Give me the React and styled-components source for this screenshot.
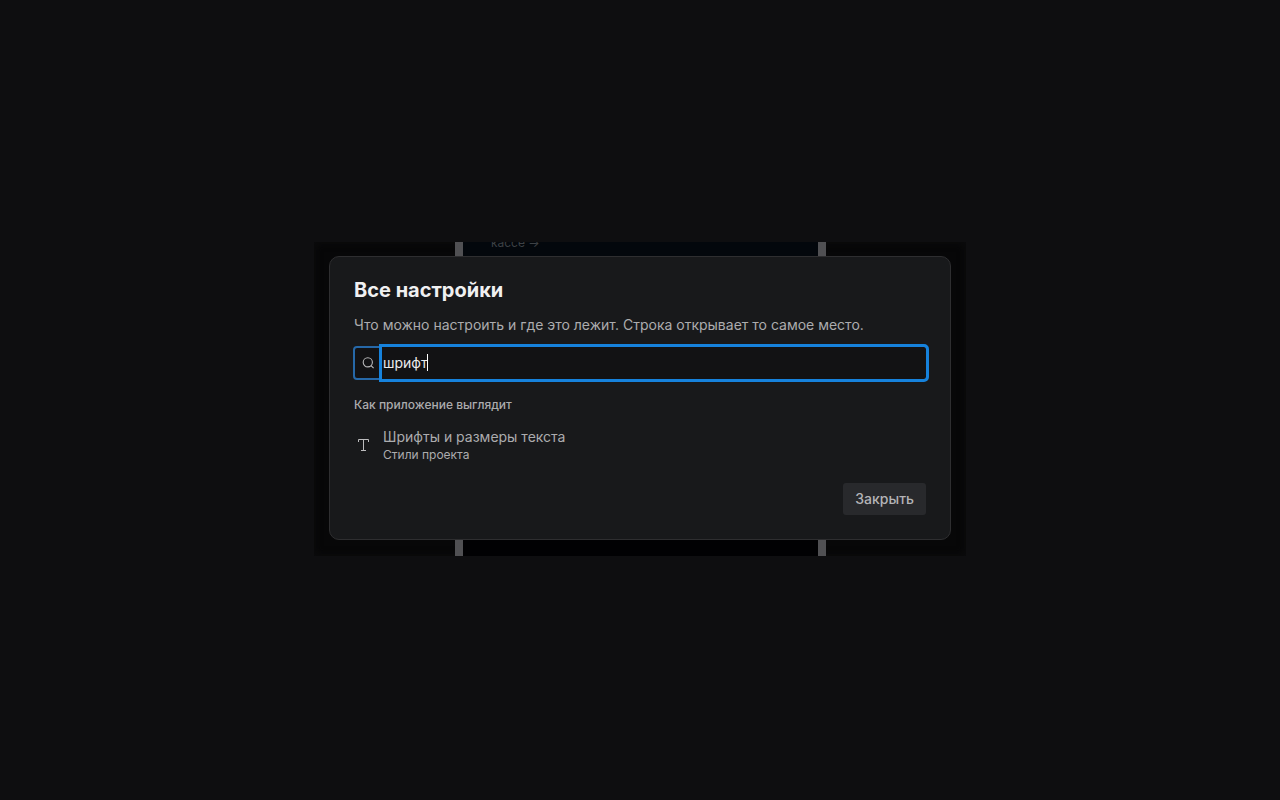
import React, { useState } from "react";
import styled, { createGlobalStyle } from "styled-components";

const GlobalStyle = createGlobalStyle`
  *, *::before, *::after {
    box-sizing: border-box;
  }

  body {
    margin: 0;
    background: #0e0e10;
    color: #acacae;
    font-family: Inter, "Liberation Sans", sans-serif;
    font-size: 14px;
    line-height: 20px;
  }
`;

const Page = styled.main`
  display: flex;
  align-items: center;
  justify-content: center;
  min-height: 100vh;
  padding: 0 16px 2px;
`;

const Stage = styled.div`
  position: relative;
  width: 100%;
  max-width: 652px;
  padding: 14px 15px 16px;
`;

const Backdrop = styled.div`
  position: absolute;
  inset: 0;
  display: grid;
  grid-template-columns: 141px 1fr 140px;
  overflow: hidden;
  background: #070708;
  box-shadow: inset 0 0 6px 2px #0b0b0c;
`;

const Canvas = styled.div`
  grid-column: 2;
  border: solid #505053;
  border-width: 0 8px;
  padding: 0 28px;
  background: linear-gradient(#03070c, #03070c 50%, #010103 50%);
`;

const CanvasText = styled.p`
  margin: -9px 0 0;
  color: #3d4145;
  font-size: 12px;
  line-height: 20px;
`;

const Dialog = styled.section`
  position: relative;
  padding: 20px 24px 24px;
  border: 1px solid #2e2e30;
  border-radius: 10px;
  background: #18191b;
`;

const Title = styled.h1`
  margin: 0;
  color: #f0f0f1;
  font-size: 20px;
  font-weight: 700;
  line-height: 26px;
`;

const Description = styled.p`
  margin: 12px 0;
`;

const Search = styled.label`
  display: flex;
  height: 32px;
  border-radius: 3px;
  background: #121214;
  outline: 2px solid #2668a8;
  outline-offset: -1px;
`;

const SearchIcon = styled.span`
  display: flex;
  align-items: center;
  justify-content: center;
  width: 28px;
`;

const Field = styled.span`
  position: relative;
  flex: 1;
  display: flex;
`;

const Input = styled.input`
  width: 100%;
  padding: 0 1px;
  border: 0;
  border-radius: 0 2px 2px 0;
  outline: 3px solid #1682dc;
  background: #121214;
  color: #ececed;
  font: inherit;
  caret-color: transparent;
`;

const Caret = styled.span`
  position: absolute;
  top: 7px;
  left: 45px;
  width: 1px;
  height: 17px;
  background: #fff;
`;

const GroupTitle = styled.h2`
  margin: 18px 0 8px;
  font-size: 12px;
  font-weight: 500;
  line-height: 16px;
`;

const SettingLink = styled.a`
  display: flex;
  align-items: center;
  gap: 10px;
  padding: 6px 0;
  color: inherit;
  text-decoration: none;
`;

const SettingIcon = styled.span`
  display: flex;
  justify-content: center;
  width: 19px;
`;

const SettingName = styled.span`
  display: block;
`;

const SettingPlace = styled.span`
  display: block;
  font-size: 12px;
  line-height: 16px;
`;

const Footer = styled.footer`
  display: flex;
  justify-content: flex-end;
  margin-top: 14px;
`;

const Button = styled.button`
  height: 32px;
  padding: 0 12px;
  border: 0;
  border-radius: 3px;
  background: #28292c;
  color: #b4b4b7;
  font: inherit;
  font-weight: 500;
`;

const MagnifierIcon = () => (
  <svg width="12" height="12" viewBox="0 0 12 12" fill="none" stroke="#b8b8ba" strokeWidth="1.1" aria-hidden="true">
    <circle cx="5.8" cy="5.3" r="4.6" />
    <path d="M9 8.6 11.6 11.2" />
  </svg>
);

const TypeIcon = () => (
  <svg width="13" height="14" viewBox="0 0 13 14" fill="none" stroke="#bcbcbe" aria-hidden="true">
    <path d="M1.5 4V1.5h10V4M6.5 1.5v11M4 12.5h5" />
  </svg>
);

export default function App() {
  const [query, setQuery] = useState("шрифт");

  return (
    <>
      <GlobalStyle />
      <Page>
        <Stage>
          <Backdrop>
            <Canvas>
              <CanvasText>кассе →</CanvasText>
            </Canvas>
          </Backdrop>
          <Dialog role="dialog" aria-labelledby="settings-title">
            <Title id="settings-title">Все настройки</Title>
            <Description>
              Что можно настроить и где это лежит. Строка открывает то самое место.
            </Description>
            <Search htmlFor="settings-search">
              <SearchIcon>
                <MagnifierIcon />
              </SearchIcon>
              <Field>
                <Input
                  id="settings-search"
                  type="text"
                  aria-label="Все настройки"
                  value={query}
                  onChange={(e) => setQuery(e.target.value)}
                />
                <Caret />
              </Field>
            </Search>
            <GroupTitle>Как приложение выглядит</GroupTitle>
            <SettingLink href="#styles">
              <SettingIcon>
                <TypeIcon />
              </SettingIcon>
              <span>
                <SettingName>Шрифты и размеры текста</SettingName>
                <SettingPlace>Стили проекта</SettingPlace>
              </span>
            </SettingLink>
            <Footer>
              <Button type="button">Закрыть</Button>
            </Footer>
          </Dialog>
        </Stage>
      </Page>
    </>
  );
}
